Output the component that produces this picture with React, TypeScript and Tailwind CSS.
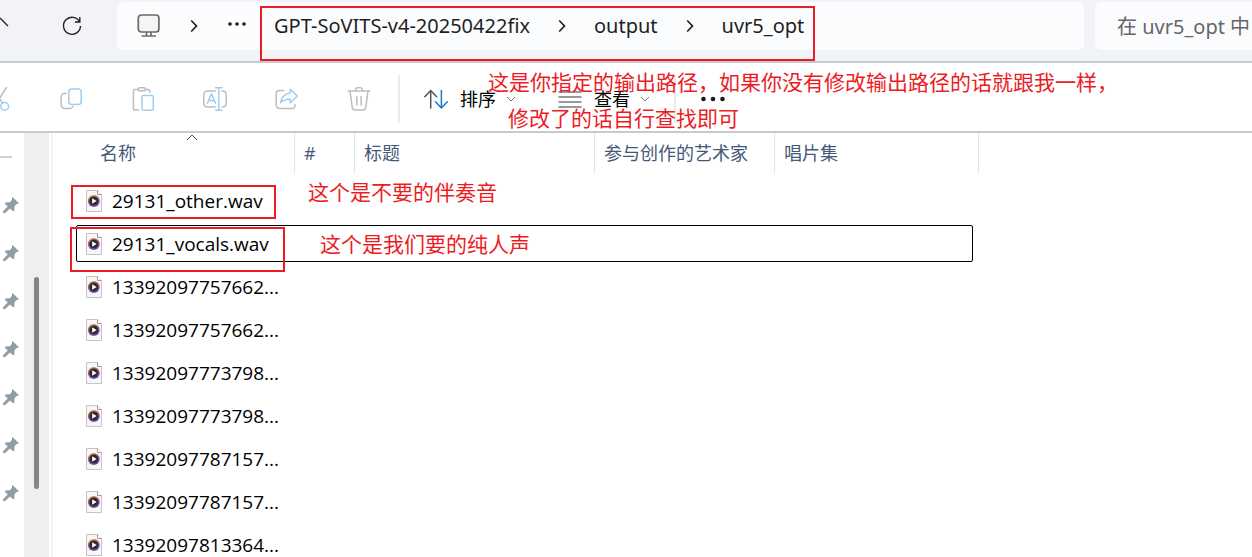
import React from 'react';

const FILES = [
  '29131_other.wav',
  '29131_vocals.wav',
  '13392097757662...',
  '13392097757662...',
  '13392097773798...',
  '13392097773798...',
  '13392097787157...',
  '13392097787157...',
  '13392097813364...',
];

const COLUMNS = ['#', '标题', '参与创作的艺术家', '唱片集'];

const PINS = [0, 1, 2, 3, 4, 5, 6];

const GRAY = '#bdbdbd';
const BLUE = '#9fcdf0';

interface IconProps {
  children: React.ReactNode;
  size?: number;
}

function Icon({ children, size = 24 }: IconProps) {
  return (
    <svg width={size} height={size} viewBox={`0 0 ${size} ${size}`} fill="none" strokeWidth="1.5" strokeLinecap="round" strokeLinejoin="round" className="shrink-0">
      {children}
    </svg>
  );
}

function CrumbChevron() {
  return (
    <svg width="8" height="14" viewBox="0 0 8 14" fill="none" stroke="#1f1f1f" strokeWidth="1.7" className="shrink-0">
      <path d="M1.2 1.5 6.5 7 1.2 12.5" />
    </svg>
  );
}

function DownChevron() {
  return (
    <svg width="10" height="6" viewBox="0 0 10 6" fill="none" stroke="#777" className="shrink-0">
      <path d="m1 1 4 4 4-4" />
    </svg>
  );
}

function Dots({ r, gap }: { r: number; gap: number }) {
  return (
    <svg width="26" height="6" viewBox="0 0 26 6" fill="#1a1a1a" className="shrink-0">
      <circle cx={13 - gap} cy="3" r={r} />
      <circle cx="13" cy="3" r={r} />
      <circle cx={13 + gap} cy="3" r={r} />
    </svg>
  );
}

function PinIcon() {
  return (
    <svg width="16" height="16" viewBox="0 0 16 16" fill="#919ba2" className="shrink-0">
      <path d="M9.600 0 15.900 6.200c-.5.7-1.300.8-2.100.6l-2.400 2.600c.4 1.900 0 3.600-1 5.200L6.900 11.600 2.200 15.900.2 16 0 14.300l4.700-4.800L1.500 6.300c1.500-1 3.300-1.300 5.100-.9l2.500-2.600C8.700 1.700 8.900.8 9.600 0Z" />
    </svg>
  );
}

function WavIcon() {
  return (
    <svg width="18" height="22" viewBox="0 0 18 22" fill="none" className="shrink-0">
      <defs>
        <linearGradient id="disc" x1="0" y1="0" x2="0.3" y2="1">
          <stop offset="0" stopColor="#f0924a" />
          <stop offset="0.5" stopColor="#a8607c" />
          <stop offset="1" stopColor="#7d4fc0" />
        </linearGradient>
      </defs>
      <path d="M1.500.5h11L16.500 4.500v17H1.500Z" fill="#f7f7f7" stroke="#c4c4c4" />
      <path d="M12.500.5v4h4" fill="#fff" stroke="#9c9c9c" />
      <circle cx="8.800" cy="11" r="6" fill="url(#disc)" />
      <circle cx="8.800" cy="11" r="4.600" fill="#2d2d30" />
      <path d="M7.200 8.200v5.600l4.400-2.800Z" fill="#fff" />
    </svg>
  );
}

const ACTIONS = [
  {
    label: '剪切',
    icon: (
      <Icon>
        <path d="M19.500.5 9 17M5 .5 15.500 16" stroke={GRAY} />
        <circle cx="17.700" cy="19.300" r="3.900" stroke={BLUE} />
        <circle cx="6.500" cy="19.300" r="3.900" stroke={BLUE} />
      </Icon>
    ),
  },
  {
    label: '复制',
    icon: (
      <Icon>
        <path d="M7 6.500H5.500a3.300 3.300 0 0 0-3.300 3.300V18a3.500 3.500 0 0 0 3.500 3.500h5a3.300 3.300 0 0 0 3.200-2" stroke={GRAY} />
        <rect x="9.800" y="2" width="12.400" height="15.500" rx="3" stroke={BLUE} />
      </Icon>
    ),
  },
  {
    label: '粘贴',
    icon: (
      <Icon>
        <path d="M7 2.500H4.200A1.800 1.800 0 0 0 2.400 4.300v16.900A1.800 1.800 0 0 0 4.200 23h3.300M14.500 2.500h2.600a1.800 1.800 0 0 1 1.800 1.800v.9" stroke={GRAY} />
        <rect x="7" y=".8" width="7.500" height="3" rx="1.500" stroke={GRAY} />
        <rect x="11" y="8.500" width="11.300" height="14.700" rx="1.500" stroke={BLUE} />
      </Icon>
    ),
  },
  {
    label: '重命名',
    icon: (
      <Icon>
        <path d="M12.500 4H4.300A3.500 3.500 0 0 0 .8 7.500v9A3.500 3.500 0 0 0 4.300 20h8.200M19 4h.7a3.500 3.500 0 0 1 3.500 3.500v9a3.500 3.500 0 0 1-3.500 3.500H19" stroke={GRAY} />
        <path d="M15.800.8v22.400M12.500.8h6.600M12.500 23.200h6.600M4.300 16.500l4.100-9.700 4.200 9.700M5.700 13.500h5.500" stroke={BLUE} />
      </Icon>
    ),
  },
  {
    label: '共享',
    icon: (
      <Icon>
        <path d="M8.500 3.500h-4A3.300 3.300 0 0 0 1.200 6.800v11.400a3.300 3.300 0 0 0 3.300 3.300h12.200a3.300 3.300 0 0 0 3.300-3.300v-.7" stroke={GRAY} />
        <path d="M15.200 2.200 22.300 9l-7.100 7v-3.800c-4-.3-6.800.7-9.500 3.500.6-5.600 3.800-8.700 9.500-9.700Z" stroke={BLUE} />
      </Icon>
    ),
  },
  {
    label: '删除',
    icon: (
      <Icon>
        <path d="M1.300 3.900h21.400M8.300 3.700a3.700 3.200 0 0 1 7.400 0M3 4.200l2.300 16.500A2.600 2.600 0 0 0 7.900 23h8.200a2.600 2.600 0 0 0 2.600-2.300L21 4.200M9.900 9.500V18M14.100 9.500V18" stroke={GRAY} />
      </Icon>
    ),
  },
];

function AddressBar() {
  return (
    <header className="flex h-[63px] border-b-2 border-[#c5cad3] bg-[#f2f3f7]">
      <div className="flex h-[50px] w-[117px] shrink-0 items-center pt-[2px]">
        <button aria-label="上移" className="w-[61px]">
          <svg width="9" height="18" viewBox="0 0 9 18" fill="none" stroke="#222" strokeWidth="1.300">
            <path d="m0 1 8 8" />
          </svg>
        </button>
        <button aria-label="刷新">
          <svg width="22" height="22" viewBox="0 0 22 22" fill="none" stroke="#222" strokeWidth="1.400">
            <path d="M18.600 7A8.500 8.500 0 1 0 19.500 11M18.800 2v5h-5" />
          </svg>
        </button>
      </div>
      <nav aria-label="路径" className="mt-[2px] flex h-12 min-w-0 flex-1 items-center rounded-md bg-[#fbfcfe] pl-5 text-[20px] text-[#1f1f1f]">
        <svg width="24" height="24" viewBox="0 0 24 24" fill="none" stroke="#6a6a6a" strokeWidth="1.700" className="shrink-0">
          <rect x="1.300" y="1" width="20.600" height="17" rx="3" fill="#f5f5f5" />
          <path d="M9.500 18v4M14 18v4M4.500 22h14.500" />
        </svg>
        <div className="ml-[29px] flex">
          <CrumbChevron />
        </div>
        <button aria-label="更多路径" className="ml-[26px] pb-1">
          <Dots r={1.8} gap={7} />
        </button>
        <div className="ml-6 flex items-center gap-7 whitespace-nowrap font-['Noto_Sans','Noto_Sans_CJK_SC',sans-serif]">
          <a href="#root">GPT-SoVITS-v4-20250422fix</a>
          <CrumbChevron />
          <a href="#output">output</a>
          <CrumbChevron />
          <a href="#uvr5">uvr5_opt</a>
        </div>
      </nav>
      <input
        aria-label="搜索"
        placeholder="在 uvr5_opt 中"
        className="ml-[11px] mt-[2px] h-12 w-[157px] shrink-0 rounded-l-md bg-[#fbfcfe] pl-[22px] font-['Noto_Sans','Noto_Sans_CJK_SC',sans-serif] text-[20px] placeholder:text-[#666]"
      />
    </header>
  );
}

function Toolbar() {
  return (
    <div className="flex h-[70px] items-center border-b-2 border-[#c5cad3] pt-1 text-[18px] text-black">
      <div className="-ml-[37px] flex">
        {ACTIONS.map(action => (
          <button key={action.label} aria-label={action.label} className="flex w-[72px] justify-center">
            {action.icon}
          </button>
        ))}
      </div>
      <div className="ml-[3px] h-12 w-[2px] bg-[#ebebeb]" />
      <button className="ml-6 flex items-center">
        <Icon>
          <path d="M6.700 3.500V21M.8 9.700l5.900-6.200 5.900 6.200" stroke="#555" />
          <path d="M17.400 3.500V21M11.500 14.800l5.900 6.200 5.900-6.200" stroke="#0f7bd6" />
        </Icon>
        <span className="ml-3 mr-[10px]">排序</span>
        <DownChevron />
      </button>
      <button className="ml-[42px] flex items-center">
        <Icon>
          <path d="M1 5h22M1 10h22M1 15h22M1 20h22" stroke="#777" />
        </Icon>
        <span className="ml-3 mr-[10px]">查看</span>
        <DownChevron />
      </button>
      <div className="ml-6 h-12 w-[2px] bg-[#ebebeb]" />
      <button aria-label="更多" className="ml-6">
        <Dots r={2.3} gap={9.5} />
      </button>
    </div>
  );
}

function FileTable() {
  return (
    <table className="ml-[23px] w-[903px] table-fixed border-collapse self-start text-left">
      <colgroup>
        <col className="w-[219px]" />
        <col className="w-[60px]" />
        <col className="w-[240px]" />
        <col className="w-[180px]" />
        <col className="w-[204px]" />
      </colgroup>
      <thead className="text-[18px] text-[#44597a]">
        <tr>
          <th className="relative h-[47px] p-0 align-top font-[370]">
            <div className="flex h-10 items-center border-r border-[#e3e3e3] pl-6">名称</div>
            <svg width="12" height="7" viewBox="0 0 12 7" fill="none" stroke="#555" className="absolute left-[110px] top-[1px]">
              <path d="m1 6 5-5 5 5" />
            </svg>
          </th>
          {COLUMNS.map(column => (
            <th key={column} className="h-[47px] p-0 align-top font-[370]">
              <div className="flex h-10 items-center border-r border-[#e3e3e3] pl-[9px]">{column}</div>
            </th>
          ))}
        </tr>
      </thead>
      <tbody className="text-[19px] text-black">
        {FILES.map((name, i) => (
          <tr key={i} className="relative h-[43px]">
            <td colSpan={5} className="p-0 pb-px">
              <div className="flex items-center gap-[9px] whitespace-nowrap pl-[9px]">
                <WavIcon />
                <span>{name}</span>
              </div>
              {i === 1 && <div className="absolute bottom-1 left-0 right-[6px] top-[2px] rounded-[2px] border border-black" />}
            </td>
          </tr>
        ))}
      </tbody>
    </table>
  );
}

// Red boxes and notes drawn over the window
function Annotations() {
  return (
    <div className="pointer-events-none absolute inset-0 whitespace-nowrap text-[21px] leading-[34px] text-[#ed1c24]">
      <div className="absolute left-[260px] top-[6px] h-[55px] w-[555px] border-2 border-[#ed1c24]" />
      <div className="absolute left-[71px] top-[185px] h-[34px] w-[205px] border-2 border-[#ed1c24]" />
      <div className="absolute left-[70px] top-[227px] h-[45px] w-[215px] border-2 border-[#ed1c24]" />
      <p className="absolute left-[488px] top-[65px]">这是你指定的输出路径，如果你没有修改输出路径的话就跟我一样，</p>
      <p className="absolute left-[508px] top-[101px]">修改了的话自行查找即可</p>
      <p className="absolute left-[308px] top-[175px]">这个是不要的伴奏音</p>
      <p className="absolute left-[320px] top-[227px]">这个是我们要的纯人声</p>
    </div>
  );
}

export default function App() {
  return (
    <div className="relative flex h-screen flex-col overflow-hidden bg-white font-['Open_Sans','Noto_Sans_CJK_SC',sans-serif] font-[370]">
      <AddressBar />
      <Toolbar />
      <main className="flex min-h-0 flex-1">
        <aside className="w-6 shrink-0 pt-[23px]">
          <div className="h-[2px] w-3 bg-[#d0d0d0]" />
          <div className="mt-[39px] flex flex-col gap-8 pl-[3px]">
            {PINS.map(pin => (
              <PinIcon key={pin} />
            ))}
          </div>
        </aside>
        <div className="w-[25px] shrink-0 bg-[#efefef] pl-[10px] pt-36">
          <div className="h-[212px] w-[5px] rounded-full bg-[#858585]" />
        </div>
        <div className="ml-[2px] w-[2px] shrink-0 bg-[#f5f5f5]" />
        <FileTable />
      </main>
      <Annotations />
    </div>
  );
}
